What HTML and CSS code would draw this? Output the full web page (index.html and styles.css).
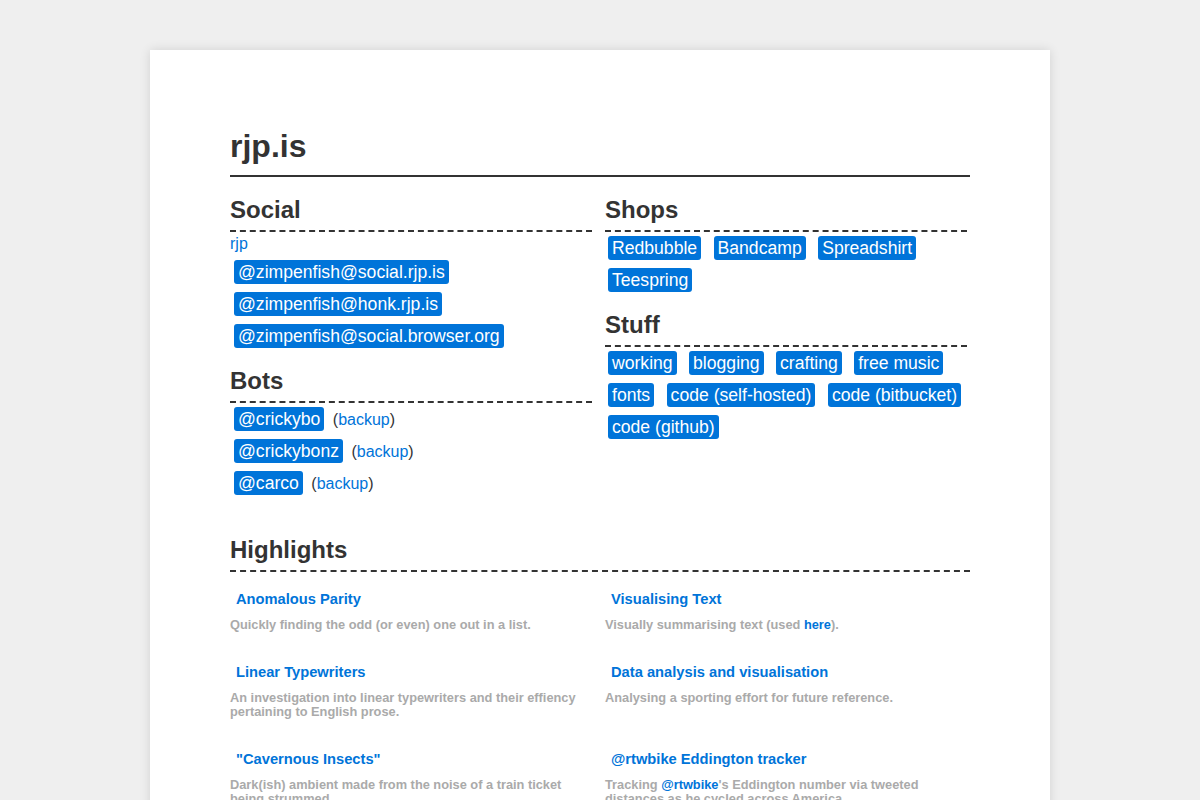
FILE: index.html
```html
<!DOCTYPE html>
<html lang="en">
<head>
    <meta charset="UTF-8">
    <meta name="viewport" content="width=device-width, initial-scale=1.0">
    <title>rjp.is</title>
    <link rel="stylesheet" href="styles.css">
</head>
<body>
    <main class="page">
        <h1>rjp.is</h1>

        <div class="columns">
            <div class="column">
                <section class="block">
                    <h2>Social</h2>
                    <ul class="links">
                        <li><a href="#" class="plain">rjp</a></li>
                        <li><a href="#" class="tag">@zimpenfish@social.rjp.is</a></li>
                        <li><a href="#" class="tag">@zimpenfish@honk.rjp.is</a></li>
                        <li><a href="#" class="tag">@zimpenfish@social.browser.org</a></li>
                    </ul>
                </section>
                <section class="block">
                    <h2>Bots</h2>
                    <ul class="links">
                        <li><a href="#" class="tag">@crickybo</a> (<a href="#" class="plain">backup</a>)</li>
                        <li><a href="#" class="tag">@crickybonz</a> (<a href="#" class="plain">backup</a>)</li>
                        <li><a href="#" class="tag">@carco</a> (<a href="#" class="plain">backup</a>)</li>
                    </ul>
                </section>
            </div>
            <div class="column">
                <section class="block">
                    <h2>Shops</h2>
                    <div class="tags">
                        <a href="#" class="tag">Redbubble</a>
                        <a href="#" class="tag">Bandcamp</a>
                        <a href="#" class="tag">Spreadshirt</a>
                        <a href="#" class="tag">Teespring</a>
                    </div>
                </section>
                <section class="block">
                    <h2>Stuff</h2>
                    <div class="tags">
                        <a href="#" class="tag">working</a>
                        <a href="#" class="tag">blogging</a>
                        <a href="#" class="tag">crafting</a>
                        <a href="#" class="tag">free music</a>
                        <a href="#" class="tag">fonts</a>
                        <a href="#" class="tag">code (self-hosted)</a>
                        <a href="#" class="tag">code (bitbucket)</a>
                        <a href="#" class="tag">code (github)</a>
                    </div>
                </section>
            </div>
        </div>

        <section class="block highlights">
            <h2>Highlights</h2>
            <div class="highlight-grid">
                <div class="highlight">
                    <h3><a href="#">Anomalous Parity</a></h3>
                    <p>Quickly finding the odd (or even) one out in a list.</p>
                </div>
                <div class="highlight">
                    <h3><a href="#">Visualising Text</a></h3>
                    <p>Visually summarising text (used <a href="#">here</a>).</p>
                </div>
                <div class="highlight">
                    <h3><a href="#">Linear Typewriters</a></h3>
                    <p>An investigation into linear typewriters and their effiency pertaining to English prose.</p>
                </div>
                <div class="highlight">
                    <h3><a href="#">Data analysis and visualisation</a></h3>
                    <p>Analysing a sporting effort for future reference.</p>
                </div>
                <div class="highlight">
                    <h3><a href="#">"Cavernous Insects"</a></h3>
                    <p>Dark(ish) ambient made from the noise of a train ticket being strummed.</p>
                </div>
                <div class="highlight">
                    <h3><a href="#">@rtwbike Eddington tracker</a></h3>
                    <p>Tracking <a href="#">@rtwbike</a>'s Eddington number via tweeted distances as he cycled across America.</p>
                </div>
            </div>
        </section>
    </main>
</body>
</html>
```

FILE: styles.css
```css
body {
    font-family: "Liberation Sans", Arial, sans-serif;
    background-color: #efefef;
    color: #333;
    margin: 0;
    padding: 50px 0;
}

a {
    color: #0074d9;
    text-decoration: none;
}

.page {
    width: 740px;
    margin: 0 auto;
    padding: 78px 80px 80px;
    background-color: white;
    box-shadow: 0 0 10px rgba(0, 0, 0, 0.12);
}

h1 {
    font-size: 32px;
    line-height: 37px;
    margin: 0;
    padding-bottom: 10px;
    border-bottom: 2px solid #333;
}

h2 {
    font-size: 24px;
    line-height: 28px;
    margin: 0;
    padding-bottom: 6px;
    border-bottom: 2px dashed #333;
}

.columns {
    display: grid;
    grid-template-columns: 362px 362px;
    column-gap: 13px;
}

.block {
    margin-top: 15px;
}

.columns .column > .block:first-child {
    margin-top: 19px;
}

.links {
    list-style: none;
    margin: 0;
    padding: 0;
    font-size: 16px;
    line-height: 24px;
}

.tags {
    font-size: 16px;
    line-height: 24px;
    margin-left: -1px;
}

.tag {
    display: inline-block;
    margin: 4px;
    padding: 2px 4px;
    font-size: 17.6px;
    line-height: 20px;
    color: white;
    background-color: #0074d9;
    border-radius: 3px;
}

.highlights {
    margin-top: 37px;
}

.highlight-grid {
    display: grid;
    grid-template-columns: 362px 362px;
    column-gap: 13px;
    padding-top: 19px;
}

.highlight {
    margin-bottom: 32px;
}

.highlight h3 {
    font-size: 14.7px;
    line-height: 17px;
    margin: 0 0 10px;
    padding-left: 6px;
}

.highlight p {
    font-size: 12.8px;
    line-height: 14px;
    font-weight: bold;
    color: #aaa;
    margin: 0;
}
```
